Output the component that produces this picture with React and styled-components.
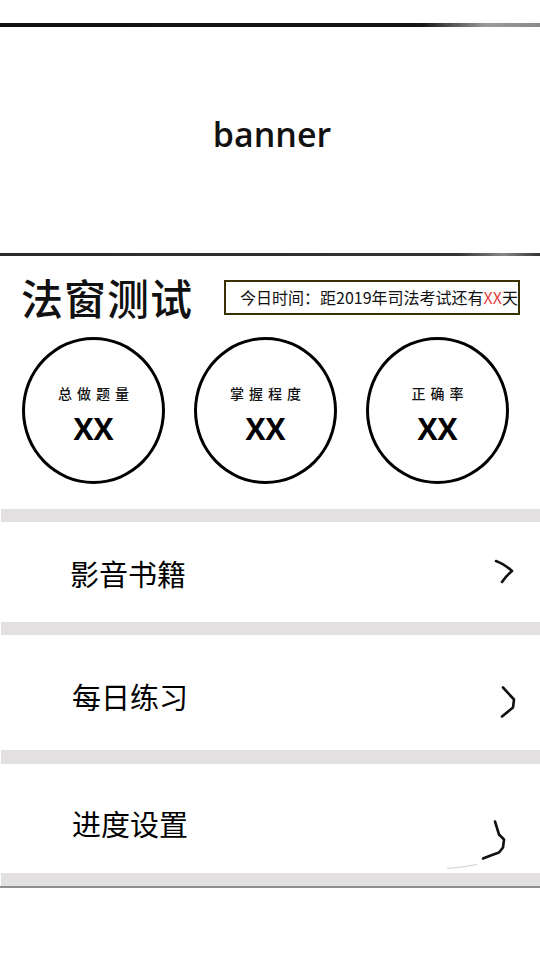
import React from "react";
import styled, { createGlobalStyle } from "styled-components";

const Global = createGlobalStyle`
  html, body { margin: 0; padding: 0; background: #fff; }
  body { font-family: "Noto Sans CJK SC", "Noto Sans", sans-serif; color: #111; }
`;

const Page = styled.div`
  width: 540px;
  height: 960px;
  background: #fff;
  overflow: hidden;
  display: flex;
  flex-direction: column;
`;

const TopRule = styled.div`
  margin-top: 23px;
  height: 4px;
  background: linear-gradient(to right, #111 0%, #141414 78%, #9a9a9a 90%, #8a8a8a 100%);
`;

const Banner = styled.div`
  height: 226px;
  box-sizing: border-box;
  padding: 0 0 12px 4px;
  display: flex;
  align-items: center;
  justify-content: center;
  font-family: "Open Sans", "Liberation Sans", sans-serif;
  font-weight: 600;
  font-size: 34px;
  color: #111;
`;

const BottomRule = styled.div`
  height: 3px;
  background: linear-gradient(to right, #2a2a2a 0%, #333 85%, #888 93%, #333 100%);
`;

const Header = styled.div`
  margin-top: 20px;
  height: 42px;
  display: flex;
  align-items: center;
  padding-left: 21px;
`;

const Title = styled.h1`
  margin: 0;
  font-size: 42px;
  line-height: 42px;
  font-weight: 500;
  letter-spacing: 1px;
  color: #111;
`;

const CountdownBox = styled.div`
  margin-left: 31px;
  width: 296px;
  height: 35px;
  box-sizing: border-box;
  border: 2px solid #3b3000;
  display: flex;
  align-items: center;
  padding-left: 14px;
  font-size: 16px;
  white-space: nowrap;
  color: #111;
`;

const Red = styled.span`
  color: #e84343;
`;

const Stats = styled.div`
  margin-top: 19px;
  display: flex;
  gap: 29px;
  padding-left: 22px;
`;

const Circle = styled.div`
  width: 143px;
  height: 147px;
  box-sizing: border-box;
  border: 3px solid #000;
  border-radius: 50%;
  display: flex;
  flex-direction: column;
  align-items: center;
  padding-top: 43px;
`;

const StatLabel = styled.div`
  font-size: 14px;
  line-height: 20px;
  font-weight: 500;
  letter-spacing: 5px;
  margin-right: -5px;
  color: #111;
`;

const StatValue = styled.div`
  margin-top: 10px;
  font-family: "Open Sans", "Liberation Sans", sans-serif;
  font-weight: 700;
  font-size: 30px;
  line-height: 32px;
  color: #000;
`;

const Divider = styled.div`
  height: ${(p) => p.$h}px;
  margin-top: ${(p) => p.$top || 0}px;
  background: #e3e0e1;
  margin-left: 1px;
`;

const Row = styled.div`
  height: ${(p) => p.$h}px;
  display: flex;
  align-items: center;
  padding-left: 70px;
  padding-right: 10px;
`;

const RowLabel = styled.div`
  font-size: 29px;
  line-height: 36px;
  font-weight: 400;
  padding-top: ${(p) => p.$shift * 2}px;
  padding-left: ${(p) => p.$indent || 0}px;
  color: #000;
`;

const Chevron = styled.svg`
  margin-left: auto;
  width: 90px;
  height: 100px;
  flex-shrink: 0;
`;

const BaseLine = styled.div`
  height: 2px;
  background: #8f8f8f;
`;

const strokeProps = {
  fill: "none",
  stroke: "#111",
  strokeWidth: 2.6,
  strokeLinecap: "round",
  strokeLinejoin: "round",
};

const stats = [
  { label: "总做题量", value: "XX" },
  { label: "掌握程度", value: "XX" },
  { label: "正确率", value: "XX" },
];

export default function App() {
  return (
    <Page>
      <Global />
      <TopRule />
      <Banner>banner</Banner>
      <BottomRule />
      <Header>
        <Title>法窗测试</Title>
        <CountdownBox>
          今日时间：距2019年司法考试还有<Red>XX</Red>天
        </CountdownBox>
      </Header>
      <Stats>
        {stats.map((s) => (
          <Circle key={s.label}>
            <StatLabel>{s.label}</StatLabel>
            <StatValue>{s.value}</StatValue>
          </Circle>
        ))}
      </Stats>
      <Divider $h={13} $top={25} />
      <Row $h={100}>
        <RowLabel $shift={1}>影音书籍</RowLabel>
        <Chevron viewBox="0 0 90 100">
          <path d="M56 39 Q66 43 72 49 Q66 54 62 60" {...strokeProps} />
        </Chevron>
      </Row>
      <Divider $h={13} />
      <Row $h={115}>
        <RowLabel $shift={3.5} $indent={2}>每日练习</RowLabel>
        <Chevron viewBox="0 0 90 100">
          <path d="M63 44.5 L74 56.5 L73 64.5 L62 73.5" {...strokeProps} />
        </Chevron>
      </Row>
      <Divider $h={14} />
      <Row $h={109}>
        <RowLabel $shift={4.5} $indent={2}>进度设置</RowLabel>
        <Chevron viewBox="0 0 90 100">
          <path d="M55 52.5 L59 65.5 L64 70.5 L63 78.5 L59 83.5 L52 86 L43 89.5" {...strokeProps} />
          <path d="M7 99.5 Q22 98.5 37 95.5" fill="none" stroke="#cfcfcf" strokeWidth="1" />
        </Chevron>
      </Row>
      <Divider $h={13} />
      <BaseLine />
    </Page>
  );
}
